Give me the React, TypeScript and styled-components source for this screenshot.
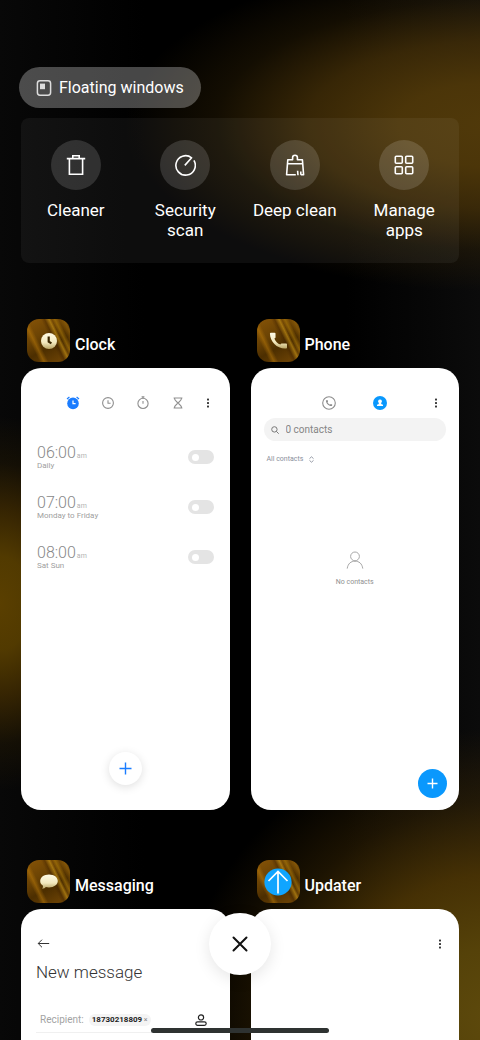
import React from "react";
import styled, { createGlobalStyle, css } from "styled-components";

const GlobalStyle = createGlobalStyle`
  * { box-sizing: border-box; }
  body { margin: 0; background: #000; font-family: Roboto, "Liberation Sans", sans-serif; }
  button { padding: 0; border: 0; background: none; font: inherit; color: inherit; cursor: pointer; }
  svg { display: block; }
`;

const Screen = styled.main`
  position: relative;
  height: 100vh;
  overflow: hidden;
  padding: 67px 21px 0;
  color: #fff;
  background:
    radial-gradient(ellipse 76% 16% at 102% 12%, #50390a 0%, rgba(78, 55, 9, 0.96) 25%, rgba(72, 50, 8, 0.76) 50%, rgba(60, 42, 6, 0.32) 75%, transparent 100%),
    radial-gradient(ellipse 26% 18% at 0% 58%, #5a3f00 0%, rgba(86, 61, 0, 0.94) 25%, rgba(72, 48, 0, 0.7) 50%, rgba(50, 34, 0, 0.3) 75%, transparent 100%),
    radial-gradient(ellipse 66% 28% at 104% 98%, #5e4a0c 0%, rgba(88, 68, 9, 0.96) 25%, rgba(78, 54, 4, 0.88) 50%, rgba(62, 42, 4, 0.45) 75%, transparent 100%),
    linear-gradient(90deg, #080808 0%, #000 30%, #000 72%, #0b0b0b 100%);
`;

const FloatingButton = styled.button`
  display: flex;
  align-items: center;
  gap: 7px;
  height: 41px;
  margin-left: -2px;
  padding: 0 17px;
  border-radius: 21px;
  background: rgba(255, 255, 255, 0.28);
  font-size: 16px;
`;

const ActionPanel = styled.nav`
  display: grid;
  grid-template-columns: repeat(4, 1fr);
  min-height: 145px;
  margin-top: 10px;
  padding: 22px 0;
  border-radius: 8px;
  background: rgba(255, 255, 255, 0.05);
`;

const Action = styled.button`
  display: flex;
  flex-direction: column;
  align-items: center;
  gap: 10px;
  font-size: 17px;
  line-height: 20px;
`;

const ActionDisc = styled.span`
  display: grid;
  place-items: center;
  width: 50px;
  height: 50px;
  border-radius: 50%;
  background: rgba(255, 255, 255, 0.14);
`;

const ActionLabel = styled.span`
  max-width: 86px;
`;

const TaskGrid = styled.section`
  display: grid;
  grid-template-columns: 1fr 1fr;
  gap: 50px 21px;
  margin-top: 56px;
`;

const Task = styled.article`
  display: flex;
  flex-direction: column;
  gap: 6px;
`;

const TaskHeader = styled.header`
  display: flex;
  align-items: center;
  gap: 5px;
  padding-left: 6px;
`;

const TaskTitle = styled.h2`
  margin: 8px 0 0;
  font-size: 16px;
  line-height: 20px;
  font-weight: 500;
`;

const AppTile = styled.span`
  display: grid;
  place-items: center;
  width: 43px;
  height: 43px;
  border-radius: 12px;
  background:
    linear-gradient(64deg, transparent 20%, rgba(190, 125, 10, 0.5) 27%, transparent 34%, transparent 54%, rgba(60, 30, 0, 0.4) 60%, rgba(190, 140, 20, 0.65) 67%, transparent 71%, rgba(180, 130, 10, 0.5) 76%, transparent 82%, rgba(150, 100, 10, 0.6) 90%, transparent 95%),
    linear-gradient(150deg, #875407 0%, #6b4304 35%, #4c2e00 60%, #744806 100%);
`;

const Preview = styled.div`
  display: flex;
  flex-direction: column;
  min-height: 442px;
  border-radius: 20px;
  background: #fff;
  color: #222;
`;

const TabBar = styled.div<{ $end: number }>`
  display: flex;
  justify-content: flex-end;
  height: 44px;
  padding: 24px ${(p) => p.$end}px 0 0;
`;

const TabButton = styled.button<{ $width: number; $before?: number }>`
  display: grid;
  place-items: center;
  width: ${(p) => p.$width}px;
  height: 21px;
  margin-left: ${(p) => p.$before ?? 0}px;
`;

const AlarmList = styled.ul`
  margin: 20px 0 0;
  padding: 0 16px;
  list-style: none;
`;

const AlarmRow = styled.li`
  display: flex;
  align-items: center;
  justify-content: space-between;
  height: 50px;
`;

const AlarmLabel = styled.label`
  display: flex;
  flex-direction: column;
  color: #a0a0a0;
`;

const AlarmTime = styled.span`
  display: flex;
  align-items: baseline;
  gap: 1px;
  font-size: 16px;
  line-height: 16px;
  font-weight: 300;
  color: #888;
`;

const Meridiem = styled.small`
  font-size: 7px;
  line-height: 8px;
  font-weight: 400;
  color: #b3b3b3;
`;

const AlarmDays = styled.span`
  font-size: 8px;
  line-height: 9px;
`;

const Toggle = styled.input`
  appearance: none;
  display: flex;
  align-items: center;
  width: 26px;
  height: 14px;
  margin: 0;
  padding: 0 4px;
  border-radius: 7px;
  background: #e4e4e4;

  &::before {
    content: "";
    width: 7px;
    height: 7px;
    border-radius: 50%;
    background: #fff;
  }

  &:checked {
    justify-content: flex-end;
    background: #1a7cff;
  }
`;

const AddButton = styled.button<{ $solid?: boolean }>`
  display: grid;
  place-items: center;
  margin-top: auto;
  border-radius: 50%;
  ${(p) =>
    p.$solid
      ? css`
          align-self: flex-end;
          width: 29px;
          height: 29px;
          margin-right: 12px;
          margin-bottom: 12px;
          background: #0a98fd;
        `
      : css`
          align-self: center;
          width: 33px;
          height: 33px;
          margin-bottom: 25px;
          background: #fff;
          box-shadow: 0 2px 10px rgba(0, 0, 0, 0.13);
        `}
`;

const SearchField = styled.label`
  display: flex;
  align-items: center;
  gap: 7px;
  height: 23px;
  margin: 6px 13px 0;
  padding: 0 7px;
  border-radius: 12px;
  background: #f3f3f3;
`;

const SearchInput = styled.input`
  flex: 1;
  min-width: 0;
  padding: 0;
  border: 0;
  outline: 0;
  background: none;
  font: 10px Roboto, "Liberation Sans", sans-serif;

  &::placeholder {
    color: #858585;
    opacity: 1;
  }
`;

const GroupButton = styled.button`
  display: flex;
  align-items: center;
  align-self: flex-start;
  gap: 5px;
  margin: 13px 0 0 16px;
  font-size: 7px;
  line-height: 10px;
  color: #8a8f9c;
`;

const EmptyState = styled.div`
  display: flex;
  flex-direction: column;
  align-items: center;
  gap: 8px;
  margin: 87px 0 0;
  font-size: 7px;
  line-height: 10px;
  color: #8f8f8f;
`;

const BackButton = styled.button`
  align-self: flex-start;
  margin: 28px 0 0 16px;
`;

const ComposeTitle = styled.h3`
  margin: 11px 0 0 15px;
  font-size: 17px;
  line-height: 22px;
  font-weight: 300;
  color: #333;
`;

const RecipientRow = styled.div`
  display: flex;
  align-items: center;
  height: 26px;
  margin: 24px 15px 0;
  padding: 0 8px 0 4px;
  border-bottom: 1px solid #f0f0f0;
`;

const RecipientLabel = styled.span`
  font-size: 10px;
  color: #a3a3a3;
`;

const Chip = styled.span`
  display: flex;
  align-items: center;
  gap: 1px;
  height: 12px;
  margin-left: 5px;
  padding: 0 3px;
  border-radius: 6px;
  background: #f4f4f4;
  font-size: 8px;
  font-weight: 700;
`;

const ChipRemove = styled.button`
  width: 5px;
  font-size: 7px;
  line-height: 8px;
  font-weight: 400;
  color: #888;
`;

const PickContact = styled.button`
  margin-left: auto;
`;

const CloseAll = styled.button`
  position: absolute;
  bottom: 65px;
  left: 50%;
  display: grid;
  place-items: center;
  width: 62px;
  height: 62px;
  margin-left: -31px;
  border-radius: 50%;
  background: #fff;
  box-shadow: 0 4px 16px rgba(0, 0, 0, 0.1);
`;

const HomeBar = styled.div`
  position: absolute;
  bottom: 7px;
  left: 50%;
  width: 178px;
  height: 5px;
  margin-left: -89px;
  border-radius: 3px;
  background: #2e3231;
`;

type IconProps = { size: number; stroke?: string; width?: number; children: React.ReactNode };

const Icon = ({ size, stroke = "#fff", width = 1.6, children }: IconProps) => (
  <svg width={size} height={size} viewBox={`0 0 ${size} ${size}`} fill="none" stroke={stroke} strokeWidth={width} aria-hidden="true">
    {children}
  </svg>
);

const MoreIcon = () => (
  <Icon size={10} stroke="none">
    <g fill="#222">
      <rect x="4.1" y="0.6" width="1.8" height="1.8" rx="0.5" />
      <rect x="4.1" y="4.1" width="1.8" height="1.8" rx="0.5" />
      <rect x="4.1" y="7.6" width="1.8" height="1.8" rx="0.5" />
    </g>
  </Icon>
);

const PlusIcon = ({ color, size }: { color: string; size: number }) => (
  <Icon size={size} stroke={color} width={1.4}>
    <path d={`M${size / 2} 0.5V${size - 0.5}M0.5 ${size / 2}H${size - 0.5}`} />
  </Icon>
);

const CreamFill = ({ id }: { id: string }) => (
  <defs>
    <linearGradient id={id} x1="0" y1="0" x2="0" y2="1">
      <stop offset="0" stopColor="#fffbe6" />
      <stop offset="0.6" stopColor="#f2e8bd" />
      <stop offset="1" stopColor="#b9a566" />
    </linearGradient>
  </defs>
);

const actions = [
  {
    label: "Cleaner",
    icon: (
      <Icon size={22}>
        <path d="M1.8 4.6H20.2M4.4 4.6V20.2H17.6V4.6M7.8 4.4V1.8H14.2V4.4" />
      </Icon>
    ),
  },
  {
    label: "Security scan",
    icon: (
      <Icon size={22}>
        <path d="M19.9 6.4A9.7 9.7 0 1 1 17.6 3.8L10.8 11.4" strokeLinejoin="round" />
      </Icon>
    ),
  },
  {
    label: "Deep clean",
    icon: (
      <Icon size={22}>
        <path
          d="M11.8 20.8H2.6L3.8 5.8H8.6V3.6A2.4 2.4 0 0 1 13.4 3.6V5.8H18.4L19.6 20.8H16.8M3.5 9.8H18.6M13.6 16.8L14 21.2M16.8 17.6V20.8"
          strokeLinejoin="round"
        />
      </Icon>
    ),
  },
  {
    label: "Manage apps",
    icon: (
      <Icon size={22}>
        <rect x="2.3" y="2.3" width="7" height="7" rx="1" />
        <rect x="12.7" y="2.3" width="7" height="7" rx="1" />
        <rect x="2.3" y="12.7" width="7" height="7" rx="1" />
        <rect x="12.7" y="12.7" width="7" height="7" rx="1" />
      </Icon>
    ),
  },
];

const clockTabs = [
  {
    label: "Alarm",
    icon: (
      <Icon size={14} stroke="#1a7cff" width={1.2}>
        <circle cx="7" cy="7.4" r="5.8" fill="#1a7cff" stroke="none" />
        <path d="M1 3L3.4 1M13 3L10.6 1" />
        <path d="M7 4.4V7.6H9.6" stroke="#fff" />
      </Icon>
    ),
  },
  {
    label: "Clock",
    icon: (
      <Icon size={14} stroke="#8f8f8f" width={1.1}>
        <circle cx="7" cy="7" r="5.4" />
        <path d="M7 4.2V7.2H9.6" />
      </Icon>
    ),
  },
  {
    label: "Stopwatch",
    icon: (
      <Icon size={14} stroke="#8f8f8f" width={1.1}>
        <circle cx="7" cy="7.4" r="5.1" />
        <path d="M7 5V7.8M7 0.8V2.4M5.6 0.9H8.4" />
      </Icon>
    ),
  },
  {
    label: "Timer",
    icon: (
      <Icon size={14} stroke="#8f8f8f" width={1.1}>
        <path d="M2.6 2H11.4M2.6 12H11.4M3.4 2C3.4 4.6 6 5.8 7 7C8 8.2 10.6 9.4 10.6 12M10.6 2C10.6 4.6 8 5.8 7 7C6 8.2 3.4 9.4 3.4 12" />
      </Icon>
    ),
  },
];

const alarms = [
  { id: "alarm-6", time: "06:00", days: "Daily" },
  { id: "alarm-7", time: "07:00", days: "Monday to Friday" },
  { id: "alarm-8", time: "08:00", days: "Sat Sun" },
];

const handset =
  "M3.2 3H7.6C8.2 3 8.6 3.4 8.6 4V8.2C8.6 8.9 8 9.4 7.3 9.6C8.4 12.7 11 15.4 14.2 16.7C14.5 16 15 15.5 15.7 15.5H20.5C21.2 15.5 21.7 16 21.7 16.6V20C21.7 20.7 21.2 21.2 20.5 21.2C10.6 21.8 2.3 13.6 2.2 4C2.2 3.4 2.6 3 3.2 3Z";

const ClockTask = () => (
  <Task>
    <TaskHeader>
      <AppTile>
        <Icon size={18} stroke="none">
          <CreamFill id="cream-clock" />
          <circle cx="9" cy="9" r="8" fill="url(#cream-clock)" />
          <path d="M8.7 4.4V9.6L11.4 11.4" stroke="#3a2600" strokeWidth="2.2" />
        </Icon>
      </AppTile>
      <TaskTitle>Clock</TaskTitle>
    </TaskHeader>
    <Preview>
      <TabBar $end={10}>
        {clockTabs.map((tab) => (
          <TabButton key={tab.label} $width={35} aria-label={tab.label}>
            {tab.icon}
          </TabButton>
        ))}
        <TabButton $width={24} aria-label="More">
          <MoreIcon />
        </TabButton>
      </TabBar>
      <AlarmList>
        {alarms.map((alarm) => (
          <AlarmRow key={alarm.id}>
            <AlarmLabel htmlFor={alarm.id}>
              <AlarmTime>
                {alarm.time}
                <Meridiem>am</Meridiem>
              </AlarmTime>
              <AlarmDays>{alarm.days}</AlarmDays>
            </AlarmLabel>
            <Toggle type="checkbox" id={alarm.id} />
          </AlarmRow>
        ))}
      </AlarmList>
      <AddButton aria-label="Add alarm">
        <PlusIcon color="#1a7cff" size={13} />
      </AddButton>
    </Preview>
  </Task>
);

const PhoneTask = () => (
  <Task>
    <TaskHeader>
      <AppTile>
        <svg width="21" height="21" viewBox="0 0 24 24" aria-hidden="true">
          <CreamFill id="cream-phone" />
          <path d={handset} fill="url(#cream-phone)" />
        </svg>
      </AppTile>
      <TaskTitle>Phone</TaskTitle>
    </TaskHeader>
    <Preview>
      <TabBar $end={11}>
        <TabButton $width={51} aria-label="Recents">
          <Icon size={14} stroke="#8c8c8c" width={1.1}>
            <circle cx="7" cy="7" r="6.3" />
            <g transform="translate(3.2 3.2) scale(0.32)">
              <path d={handset} fill="#8c8c8c" stroke="none" />
            </g>
          </Icon>
        </TabButton>
        <TabButton $width={51} aria-label="Contacts">
          <Icon size={14} stroke="none">
            <circle cx="7" cy="7" r="7" fill="#0a98fd" />
            <path d="M7 3.4a1.9 1.9 0 0 1 1.2 3.4V8L10 8.7V10H4V8.7L5.8 8V6.8A1.9 1.9 0 0 1 7 3.4z" fill="#fff" />
          </Icon>
        </TabButton>
        <TabButton $width={24} $before={19} aria-label="More">
          <MoreIcon />
        </TabButton>
      </TabBar>
      <SearchField>
        <Icon size={8} stroke="#777" width={1}>
          <circle cx="3.4" cy="3.4" r="2.7" />
          <path d="M5.4 5.4L7.7 7.7" />
        </Icon>
        <SearchInput type="text" placeholder="0 contacts" aria-label="Search contacts" />
      </SearchField>
      <GroupButton>
        All contacts
        <Icon size={7} stroke="#8a8f9c" width={0.9}>
          <path d="M1.5 2.6L3.5 0.8L5.5 2.6M1.5 4.4L3.5 6.2L5.5 4.4" />
        </Icon>
      </GroupButton>
      <EmptyState>
        <Icon size={18} stroke="#a8a8a8" width={1}>
          <circle cx="9" cy="5.4" r="4.4" />
          <path d="M1.2 17.6C2 12.4 5 10.2 9 10.2S16 12.4 16.8 17.6" />
        </Icon>
        No contacts
      </EmptyState>
      <AddButton $solid aria-label="Add contact">
        <PlusIcon color="#fff" size={11} />
      </AddButton>
    </Preview>
  </Task>
);

const MessagingTask = () => (
  <Task>
    <TaskHeader>
      <AppTile>
        <Icon size={20} stroke="none">
          <CreamFill id="cream-message" />
          <path
            d="M10 2.5C15 2.5 18.8 5.3 18.8 9S15 15.4 10 15.4C8.8 15.4 7.8 15.3 6.8 15C6 15.9 4.8 16.7 3.2 16.7C3.8 15.8 4.1 14.9 4 13.8C2.2 12.6 1.2 11 1.2 9C1.2 5.3 5 2.5 10 2.5Z"
            fill="url(#cream-message)"
          />
        </Icon>
      </AppTile>
      <TaskTitle>Messaging</TaskTitle>
    </TaskHeader>
    <Preview>
      <BackButton aria-label="Back">
        <Icon size={13} stroke="#333" width={1}>
          <path d="M12.2 6.5H1.2M5 2.7L1.2 6.5L5 10.3" />
        </Icon>
      </BackButton>
      <ComposeTitle>New message</ComposeTitle>
      <RecipientRow>
        <RecipientLabel>Recipient:</RecipientLabel>
        <Chip>
          18730218809
          <ChipRemove aria-label="Remove recipient">×</ChipRemove>
        </Chip>
        <PickContact aria-label="Choose contact">
          <Icon size={12} stroke="#222" width={1.2}>
            <circle cx="6" cy="3.4" r="2.6" />
            <rect x="0.8" y="7.8" width="10.4" height="3.6" rx="1.8" />
          </Icon>
        </PickContact>
      </RecipientRow>
    </Preview>
  </Task>
);

const UpdaterTask = () => (
  <Task>
    <TaskHeader>
      <AppTile>
        <Icon size={28} width={1.7}>
          <circle cx="14" cy="14" r="13.6" fill="#10a5ff" stroke="none" />
          <path d="M14 25.5V3.5M4.5 13L14 3.5L23.5 13" />
        </Icon>
      </AppTile>
      <TaskTitle>Updater</TaskTitle>
    </TaskHeader>
    <Preview>
      <TabBar $end={7}>
        <TabButton $width={24} aria-label="More">
          <MoreIcon />
        </TabButton>
      </TabBar>
    </Preview>
  </Task>
);

export default function App() {
  return (
    <>
      <GlobalStyle />
      <Screen>
        <FloatingButton>
          <Icon size={16} stroke="#ddd" width={1.5}>
            <rect x="1.4" y="0.8" width="13.2" height="14.4" rx="2.6" />
            <rect x="4" y="3.6" width="5" height="5.6" fill="#ddd" stroke="none" />
          </Icon>
          Floating windows
        </FloatingButton>
        <ActionPanel>
          {actions.map((action) => (
            <Action key={action.label}>
              <ActionDisc>{action.icon}</ActionDisc>
              <ActionLabel>{action.label}</ActionLabel>
            </Action>
          ))}
        </ActionPanel>
        <TaskGrid>
          <ClockTask />
          <PhoneTask />
          <MessagingTask />
          <UpdaterTask />
        </TaskGrid>
        <CloseAll aria-label="Close all">
          <Icon size={16} stroke="#111" width={2}>
            <path d="M1.5 1.5L14.5 14.5M14.5 1.5L1.5 14.5" strokeLinecap="round" />
          </Icon>
        </CloseAll>
        <HomeBar />
      </Screen>
    </>
  );
}
